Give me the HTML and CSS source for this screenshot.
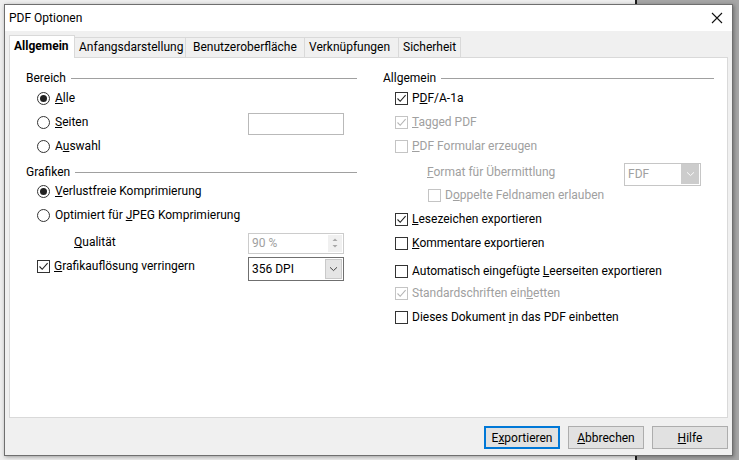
FILE: index.html
```html
<!DOCTYPE html>
<html lang="de">
<head>
<meta charset="utf-8">
<title>PDF Optionen</title>
<link rel="stylesheet" href="styles.css">
</head>
<body>
<div class="dialog">
  <div class="titlebar">
    <span class="title">PDF Optionen</span>
    <svg class="close" width="12" height="12" viewBox="0 0 12 12"><path d="M1 1 L11 11 M11 1 L1 11" stroke="#111" stroke-width="1.1" fill="none"/></svg>
  </div>
  <div class="body">
    <div class="tabs">
      <div class="tab active t1">Allgemein</div>
      <div class="tab t2">Anfangsdarstellung</div>
      <div class="tab t3">Benutzeroberfläche</div>
      <div class="tab t4">Verknüpfungen</div>
      <div class="tab t5">Sicherheit</div>
    </div>
    <div class="panel">
      <div class="col">
        <div class="hdr r-bereich"><span>Bereich</span><i></i></div>
        <div class="row ind r-alle"><span class="radio on"></span><span><u>A</u>lle</span></div>
        <div class="row ind r-seiten"><span class="radio"></span><span class="grow"><u>S</u>eiten</span><span class="textbox"></span></div>
        <div class="row ind r-auswahl"><span class="radio"></span><span>A<u>u</u>swahl</span></div>
        <div class="hdr r-grafiken"><span>Grafiken</span><i></i></div>
        <div class="row ind r-verl"><span class="radio on"></span><span><u>V</u>erlustfreie Komprimierung</span></div>
        <div class="row ind r-opt"><span class="radio"></span><span>Optimiert für <u>J</u>PEG Komprimierung</span></div>
        <div class="row r-qual"><span class="grow qlabel"><u>Q</u>ualität</span>
          <span class="spin"><span class="val">90 %</span><span class="arrows"><svg width="8" height="16" viewBox="0 0 8 16"><path d="M1.5 6 L4 3.5 L6.5 6 Z M1.5 10 L4 12.5 L6.5 10 Z" fill="#a8a8a8"/></svg></span></span></div>
        <div class="row ind r-graf"><span class="check on"><svg width="11" height="11" viewBox="0 0 11 11"><path d="M1.5 5.5 L4.2 8.3 L9.6 2.2" stroke="#222" stroke-width="1.1" fill="none"/></svg></span><span class="grow"><u>G</u>rafikauflösung verringern</span>
          <span class="combo"><span class="val">356 DPI</span><span class="btn"><svg width="9" height="6" viewBox="0 0 9 6"><path d="M1 1.3 L4.5 4.6 L8 1.3" stroke="#444" stroke-width="1" fill="none"/></svg></span></span></div>
      </div>
      <div class="col">
        <div class="hdr r-bereich"><span>Allgemein</span><i></i></div>
        <div class="row ind2 r-alle"><span class="check on"><svg width="11" height="11" viewBox="0 0 11 11"><path d="M1.5 5.5 L4.2 8.3 L9.6 2.2" stroke="#222" stroke-width="1.1" fill="none"/></svg></span><span>P<u>D</u>F/A-1a</span></div>
        <div class="row ind2 r-seiten dis"><span class="check on"><svg width="11" height="11" viewBox="0 0 11 11"><path d="M1.5 5.5 L4.2 8.3 L9.6 2.2" stroke="#b5b5b5" stroke-width="1.1" fill="none"/></svg></span><span><u>T</u>agged PDF</span></div>
        <div class="row ind2 r-auswahl dis"><span class="check"></span><span><u>P</u>DF Formular erzeugen</span></div>
        <div class="row r-format dis"><span class="grow flabel"><u>F</u>ormat für Übermittlung</span>
          <span class="combo fdf"><span class="val">FDF</span><span class="btn"><svg width="9" height="6" viewBox="0 0 9 6"><path d="M1 1.3 L4.5 4.6 L8 1.3" stroke="#fafafa" stroke-width="1" fill="none"/></svg></span></span></div>
        <div class="row ind3 r-dopp dis"><span class="check"></span><span>D<u>o</u>ppelte Feldnamen erlauben</span></div>
        <div class="row ind2 r-lese"><span class="check on"><svg width="11" height="11" viewBox="0 0 11 11"><path d="M1.5 5.5 L4.2 8.3 L9.6 2.2" stroke="#222" stroke-width="1.1" fill="none"/></svg></span><span><u>L</u>esezeichen exportieren</span></div>
        <div class="row ind2 r-komm"><span class="check"></span><span><u>K</u>ommentare exportieren</span></div>
        <div class="row ind2 r-auto"><span class="check"></span><span>Automatisch eingefügte <u>L</u>eerseiten exportieren</span></div>
        <div class="row ind2 r-std dis"><span class="check on"><svg width="11" height="11" viewBox="0 0 11 11"><path d="M1.5 5.5 L4.2 8.3 L9.6 2.2" stroke="#b5b5b5" stroke-width="1.1" fill="none"/></svg></span><span>Standardschriften ein<u>b</u>etten</span></div>
        <div class="row ind2 r-dies"><span class="check"></span><span>Dieses Dokument <u>i</u>n das PDF einbetten</span></div>
      </div>
    </div>
    <div class="buttons">
      <button class="b default">E<u>x</u>portieren</button>
      <button class="b"><u>A</u>bbrechen</button>
      <button class="b"><u>H</u>ilfe</button>
    </div>
  </div>
</div>
</body>
</html>
```
FILE: styles.css
```css
html, body { margin: 0; padding: 0; }
body {
  width: 739px; height: 460px; overflow: hidden;
  background: linear-gradient(to right, #eeeeee 0, #eeeeee 635px, #1c1c1c 635px, #1c1c1c 637px, #a6a6a6 637px);
  font-family: Roboto, "Noto Sans", "Liberation Sans", sans-serif;
  font-size: 12px;
  color: #000;
}
.dialog {
  margin: 4px 0 0 4px;
  width: 727px; height: 450px;
  border: 1px solid #6f6f6f;
  background: #f0f0f0;
  box-shadow: 1px 1px 4px rgba(0,0,0,0.35);
  display: flex; flex-direction: column;
}
.titlebar {
  height: 26px; background: #fff;
  display: flex; align-items: center; justify-content: space-between;
  padding: 0 9px 0 4px;
}
.title { font-size: 12px; }
.close { display: block; }
.body { flex: 1; display: flex; flex-direction: column; padding: 4px 0 0 4px; }
.tabs { display: flex; align-items: flex-end; height: 22px; }
.tab {
  box-sizing: border-box; height: 20px; line-height: 18px;
  border: 1px solid #d9d9d9; border-bottom: none; margin-left: -1px;
  background: #f0f0f0; padding-left: 4px; white-space: nowrap;
}
.tab.active { line-height: 21px; background: #fff; font-weight: bold; margin-left: 0; position: relative; z-index: 1; margin-bottom: -1px; height: 23px; }
.t1 { width: 66px; }
.t2 { width: 112px; }
.t3 { width: 120px; padding-left: 7px; }
.t4 { width: 95px; }
.t5 { width: 63px; }
.panel {
  box-sizing: border-box;
  width: 719px; height: 361px;
  background: #fff; border: 1px solid #d9d9d9;
  display: flex; gap: 26px;
  padding: 0 13px 0 16px;
}
.col { width: 331px; display: flex; flex-direction: column; }
.hdr, .row { height: 18px; display: flex; align-items: center; white-space: nowrap; }
.hdr i { flex: 1; height: 1px; background: #a0a0a0; margin-left: 5px; margin-top: 1px; }
.ind { padding-left: 11px; }
.ind2 { padding-left: 12px; }
.ind3 { padding-left: 45px; }
.grow { flex: 1; }
.r-bereich { margin-top: 11px; }
.r-alle { margin-top: 2px; }
.r-seiten { margin-top: 6px; }
.r-auswahl { margin-top: 6px; }
.r-grafiken { margin-top: 8px; }
.r-verl { margin-top: 1px; }
.r-opt { margin-top: 6px; }
.r-qual { margin-top: 9px; }
.r-graf { margin-top: 6px; }
.r-format { margin-top: 8px; }
.r-dopp { margin-top: 5px; }
.r-lese { margin-top: 6px; }
.r-komm { margin-top: 6px; }
.r-auto { margin-top: 10px; }
.r-std { margin-top: 4px; }
.r-dies { margin-top: 6px; }
.radio {
  box-sizing: border-box; width: 13px; height: 13px; border-radius: 50%;
  border: 1px solid #333; background: #fff; margin-right: 5px; flex: none;
  display: flex; align-items: center; justify-content: center;
}
.radio.on::after { content: ""; width: 7px; height: 7px; border-radius: 50%; background: #222; }
.check {
  box-sizing: border-box; width: 13px; height: 13px;
  border: 1px solid #333; background: #fff; margin-right: 4px; flex: none;
  display: flex; align-items: center; justify-content: center;
}
.check svg { display: block; }
.dis { color: #a0a0a0; }
.dis .check { border-color: #c4c4c4; }
.textbox {
  box-sizing: border-box; width: 96px; height: 22px; margin-top: 4px; margin-right: 13px;
  border: 1px solid #b9b9b9; background: #fff; flex: none;
}
.qlabel { padding-left: 48px; }
.spin {
  box-sizing: border-box; width: 96px; height: 21px; margin-top: 2px; margin-right: 13px;
  border: 1px solid #cccccc; background: #fff; flex: none;
  display: flex; align-items: center; justify-content: space-between;
  color: #a0a0a0; padding-left: 3px;
}
.spin .arrows {
  width: 14px; height: 17px; margin-right: 1px; background: #f0f0f0;
  display: flex; align-items: center; justify-content: center;
}
.spin svg { display: block; }
.combo {
  box-sizing: border-box; width: 96px; height: 24px; margin-top: 5px; margin-right: 13px;
  border: 1px solid #6f6f6f; background: #fff; flex: none;
  display: flex; align-items: center; justify-content: space-between;
  padding-left: 3px;
}
.combo .btn {
  box-sizing: border-box; width: 17px; height: 20px; margin-right: 1px;
  background: #e5e5e5; border: 1px solid #c9c9c9;
  display: flex; align-items: center; justify-content: center;
}
.combo svg { display: block; }
.flabel { padding-left: 44px; }
.combo.fdf { width: 77px; height: 23px; margin-top: 4px; border-color: #c6c6c6; margin-right: 13px; }
.combo.fdf .btn { background: #cccccc; border-color: #cccccc; width: 18px; }
.buttons {
  display: flex; justify-content: flex-end; gap: 8px;
  padding: 8px 0 0 0; width: 719px;
}
.b {
  box-sizing: border-box; width: 76px; height: 23px;
  font-family: inherit; font-size: 12px; color: #000;
  background: #e1e1e1; border: 1px solid #adadad; padding: 0;
}
.b.default { border: 2px solid #0078d7; }
```
